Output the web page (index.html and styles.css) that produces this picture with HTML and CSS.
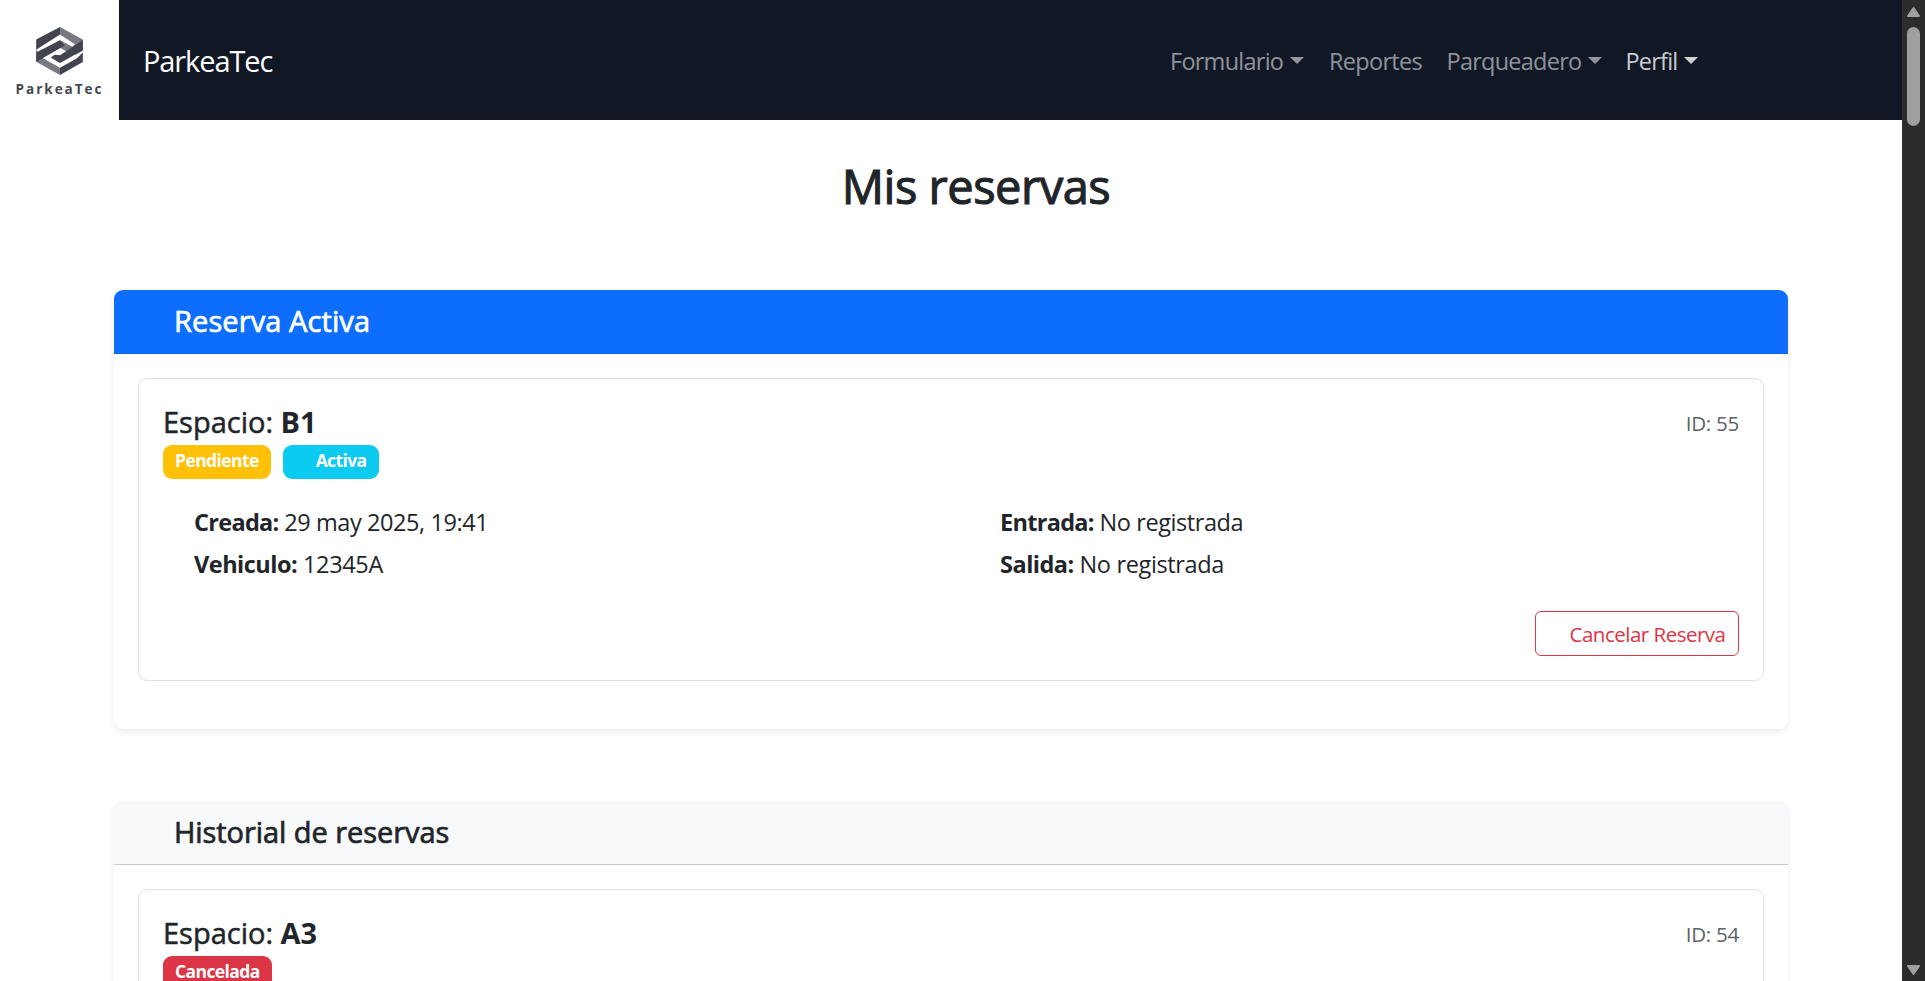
FILE: index.html
```
<!DOCTYPE html>
<html lang="es">
<head>
<meta charset="utf-8">
<title>ParkeaTec</title>
<link rel="stylesheet" href="styles.css">
</head>
<body>
<div class="page">
<div class="view">
  <header class="navbar">
    <div class="logo">
      <svg class="logo-mark" viewBox="0 0 141 145" width="47" height="48">
        <path fill="#777a82" d="M72 0L141 38v34L119 84l-22-12 20-20L72 23z"/>
        <path fill="#42454f" d="M72 0L0 38v31l72-46z"/>
        <path fill="#777a82" d="M0 68v37l72 40v-22L22 95z"/>
        <path fill="#777a82" d="M72 40l42 22-22 12-20-11-16 9-16-14z"/>
        <path fill="#42454f" d="M72 40L0 77v29l72-42 14-8z"/>
        <path fill="#42454f" d="M141 39v31l-69 39-28-17 12-8 16 1z"/>
        <path fill="#42454f" d="M141 77v29l-69 39v-22l50-28z"/>
        <path fill="#fff" d="M72 66l11 6-11 7-11-7z"/>
      </svg>
      <span class="logo-name">ParkeaTec</span>
    </div>
    <a class="brand">ParkeaTec</a>
    <nav class="nav">
      <a class="nav-link w-form">Formulario<i class="caret"></i></a>
      <a class="nav-link w-rep">Reportes</a>
      <a class="nav-link w-parq">Parqueadero<i class="caret"></i></a>
      <a class="nav-link active w-perf">Perfil<i class="caret"></i></a>
    </nav>
  </header>
  <main class="main">
    <h1 class="title">Mis reservas</h1>
    <section class="card">
      <h2 class="card-header primary">Reserva Activa</h2>
      <div class="card-body">
        <article class="item">
          <div class="item-top">
            <h3 class="space">Espacio: <b>B1</b></h3>
            <span class="id">ID: 55</span>
          </div>
          <div class="badges">
            <span class="badge warning">Pendiente</span>
            <span class="badge info">Activa</span>
          </div>
          <div class="details">
            <p><b>Creada:</b> 29 may 2025, 19:41</p>
            <p><b>Entrada:</b> No registrada</p>
            <p class="roomy"><b>Vehiculo:</b> 12345A</p>
            <p class="roomy"><b>Salida:</b> No registrada</p>
          </div>
          <div class="actions"><button class="cancel">Cancelar Reserva</button></div>
        </article>
      </div>
    </section>
    <section class="card">
      <h2 class="card-header light">Historial de reservas</h2>
      <div class="card-body">
        <article class="item">
          <div class="item-top">
            <h3 class="space">Espacio: <b>A3</b></h3>
            <span class="id">ID: 54</span>
          </div>
          <div class="badges">
            <span class="badge danger">Cancelada</span>
          </div>
        </article>
      </div>
    </section>
  </main>
</div>
<div class="scrollbar">
  <svg width="15" height="12" viewBox="0 0 15 12"><path d="M7.500 2L13 10H2z" fill="#a0a0a0" stroke="#a0a0a0" stroke-width="2" stroke-linejoin="round"/></svg>
  <div class="thumb"></div>
  <svg class="down" width="15" height="12" viewBox="0 0 15 12"><path d="M7.500 10L13 2H2z" fill="#a0a0a0" stroke="#a0a0a0" stroke-width="2" stroke-linejoin="round"/></svg>
</div>
</div>
</body>
</html>
```
FILE: styles.css
```
* { box-sizing: border-box; }
body {
  margin: 0;
  font-family: "Open Sans", "Noto Sans", sans-serif;
  font-size: 23.5px;
  color: #212529;
  background: #fff;
  overflow: hidden;
}
h1, h2, h3, p { margin: 0; white-space: nowrap; }
.page { display: flex; height: 981px; overflow: hidden; }
.view { flex: 1; min-width: 0; overflow: hidden; }

.navbar { display: flex; align-items: center; height: 120px; background: #101725; }
.logo {
  width: 119px; height: 120px; background: #fff;
  display: flex; flex-direction: column; align-items: center;
  padding-top: 27px;
}
.logo-name {
  font: 700 13.500px/16px "Open Sans", sans-serif;
  letter-spacing: 2px; color: #45484f; margin-top: 6px;
}
.brand { margin-left: 24px; font-size: 29px; letter-spacing: -1.1px; color: #fff; }
.nav { margin-left: auto; margin-right: 204px; display: flex; padding-top: 2px; }
.nav-link {
  color: rgba(255, 255, 255, .55); letter-spacing: -0.75px;
  display: flex; align-items: center; white-space: nowrap;
}
.w-form { width: 159px; }
.w-rep { width: 117.5px; letter-spacing: -0.7px; }
.w-parq { width: 179px; }
.w-perf { width: 72.5px; letter-spacing: -0.8px; }
.nav-link.active { color: rgba(255, 255, 255, .8); }
.caret {
  border: 7px solid transparent; border-top-color: currentColor; border-bottom: 0;
  margin-left: 6.5px; margin-bottom: 2px;
}

.main { padding: 0 114px; }
.title {
  margin-top: 36px; height: 134px; padding-left: 50px;
  font-size: 47px; line-height: 60px; font-weight: 400; text-align: center;
  letter-spacing: -0.5px; -webkit-text-stroke: 1.1px currentColor;
}
.card {
  border-radius: 9px; margin-bottom: 72px; background: #fff;
  box-shadow: 0 3px 6px rgba(0, 0, 0, .075);
}
.card-header {
  height: 64px; padding-left: 60px; border-radius: 9px 9px 0 0;
  font-size: 29px; line-height: 62px; font-weight: 400;
  -webkit-text-stroke: 0.7px currentColor;
}
.primary { background: #0d6efd; color: #fff; border-bottom: 1px solid #0c63e4; letter-spacing: 0.1px; }
.light { background: #f8f9fa; border-bottom: 1px solid #c8cacc; letter-spacing: -0.06px; }
.card-body { padding: 24px 24px 48px; }
.item { height: 303px; border: 1px solid #dee2e6; border-radius: 9px; padding: 24px; }
.item-top { display: flex; justify-content: space-between; height: 42px; line-height: 38px; }
.space { font-size: 29px; font-weight: 400; -webkit-text-stroke: 0.5px currentColor; }
.space b { -webkit-text-stroke: 0; }
.id { font-size: 20.500px; line-height: 40px; letter-spacing: -0.25px; color: #5c6268; }
.badges { display: flex; gap: 12px; }
.badge {
  height: 34px; border-radius: 9px; padding: 0 12px;
  font-size: 17.500px; line-height: 31px; font-weight: 700; color: #fff; white-space: nowrap;
  letter-spacing: -0.6px;
}
.info { background: #0dcaf0; padding-left: 33px; }
.warning { background: #ffc107; }
.danger { background: #dc3545; }
.details {
  display: grid; grid-template-columns: 806px 1fr; grid-auto-rows: 42px;
  margin: 22px 0 0 31px; line-height: 42px; letter-spacing: -0.42px;
}
.details b { letter-spacing: -0.7px; }
.details .roomy { letter-spacing: -0.35px; }
.details .roomy b { letter-spacing: -0.5px; }
.actions { display: flex; justify-content: flex-end; margin-top: 26px; }
.cancel {
  width: 204px; height: 45px; padding: 0 12px 0 33px;
  border: 1px solid #dc3545; border-radius: 6px; background: #fff; color: #dc3545;
  font: 400 20.500px "Open Sans", sans-serif; white-space: nowrap; letter-spacing: -0.5px;
}

.scrollbar {
  width: 23px; background: #2c2c2c;
  display: flex; flex-direction: column; align-items: center; padding: 6px 0 5px;
}
.thumb { width: 13px; height: 99px; border-radius: 7px; background: #9f9f9f; margin-top: 9px; }
.down { margin-top: auto; }
```
